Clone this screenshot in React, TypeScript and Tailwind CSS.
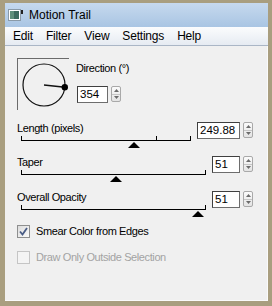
import React from 'react'

const font = { fontFamily: '"Liberation Sans", Arial, sans-serif' }

function Spin() {
  return (
    <div className="flex h-[16px] w-[10px] flex-col overflow-hidden rounded-[2px] border border-[#a9a9a9] bg-gradient-to-b from-[#fbfbfb] to-[#e4e4e4]">
      <div className="flex flex-1 items-center justify-center border-b border-[#c6c6c6]">
        <svg width="5" height="3" viewBox="0 0 5 3">
          <path d="M0 3 L2.5 0 L5 3 Z" fill="#6b6b6b" />
        </svg>
      </div>
      <div className="flex flex-1 items-center justify-center">
        <svg width="5" height="3" viewBox="0 0 5 3">
          <path d="M0 0 L2.5 3 L5 0 Z" fill="#6b6b6b" />
        </svg>
      </div>
    </div>
  )
}

function NumberBox({ value, width }: { value: string; width: string }) {
  return (
    <div className="flex items-start gap-[3px]">
      <div
        className={`${width} h-[17px] border border-[#6d6d6d] border-t-[#3f3f3f] border-l-[#3f3f3f] bg-white pl-[2px] text-[11.5px] leading-[15px] text-black`}
      >
        {value}
      </div>
      <Spin />
    </div>
  )
}

function Slider({
  label,
  trackWidth,
  thumb,
  tick,
  value,
  boxWidth,
}: {
  label: string
  trackWidth: string
  thumb: number
  tick?: number
  value: string
  boxWidth: string
}) {
  return (
    <div className="flex h-[34px] items-start justify-between pl-[12px] pr-[14px]">
      <div className="flex flex-col">
        <div className="h-[14px] text-[11px] leading-[14px] tracking-[-0.4px] text-black">{label}</div>
        <div className={`relative ml-[4px] mt-[1px] h-[5px] ${trackWidth} border-b border-l border-r border-black`}>
          {tick !== undefined && (
            <div className="absolute top-0 h-[4px] w-px bg-black" style={{ left: tick }} />
          )}
          <svg
            className="absolute top-[6px]"
            style={{ left: thumb - 6 }}
            width="12"
            height="6"
            viewBox="0 0 12 6"
          >
            <path d="M6 0 L12 6 L0 6 Z" fill="#000" />
          </svg>
        </div>
      </div>
      <div className="mt-[1px]">
        <NumberBox value={value} width={boxWidth} />
      </div>
    </div>
  )
}

function Dial() {
  return (
    <div className="h-[52px] w-[52px] border-l border-t border-[#6b6b6b] border-b-white border-r-white">
      <svg width="51" height="51" viewBox="0 0 51 51">
        <circle cx="26" cy="26" r="21" fill="none" stroke="#111" strokeWidth="1.2" />
        <line x1="26" y1="26" x2="47" y2="28.2" stroke="#111" strokeWidth="1.4" />
        <circle cx="46.8" cy="28.2" r="3.2" fill="#000" />
      </svg>
    </div>
  )
}

function Checkbox({ checked, disabled }: { checked?: boolean; disabled?: boolean }) {
  return (
    <div
      className={`flex h-[13px] w-[13px] items-center justify-center border ${
        disabled ? 'border-[#c5c5c5] bg-[#f4f4f4]' : 'border-[#8e8f8f] bg-gradient-to-br from-[#dcdcdc] to-[#fbfbfb]'
      }`}
    >
      {checked && (
        <svg width="9" height="9" viewBox="0 0 9 9">
          <path d="M1 4.5 L3.5 7.5 L8 1" fill="none" stroke="#4a5d86" strokeWidth="1.8" />
        </svg>
      )}
    </div>
  )
}

export default function App() {
  return (
    <div className="h-[306px] w-[272px] bg-[#a99e7f] pb-[5px] pl-[5px] pr-[4px] pt-[3px]" style={font}>
      <div className="flex h-full flex-col">
        {/* Title bar */}
        <div className="flex h-[24px] items-center gap-[6px] bg-gradient-to-b from-[#c6d9ee] to-[#a9c5e3] pl-[3px]">
          <svg width="15" height="12" viewBox="0 0 15 12">
            <rect x="0.5" y="0.5" width="12" height="11" fill="#fff" stroke="#8a9aa8" />
            <rect x="2" y="2" width="9" height="8" fill="#3d6b5e" />
            <rect x="2" y="2" width="4" height="8" fill="#5f8f7a" />
            <rect x="13" y="1" width="2" height="4" fill="#222" />
          </svg>
          <span className="text-[12px] text-black">Motion Trail</span>
        </div>

        {/* Menu bar */}
        <div className="flex h-[19px] items-center gap-[13px] border-b border-[#aab6c6] bg-gradient-to-b from-[#fbfcfd] to-[#e6ebf2] pl-[8px] text-[12px] tracking-[-0.2px] text-black">
          <span>Edit</span>
          <span>Filter</span>
          <span>View</span>
          <span>Settings</span>
          <span>Help</span>
        </div>

        {/* Content */}
        <div className="flex flex-1 flex-col border-b border-r border-[#fafafa] bg-[#f0f0f0]">
          <div className="mt-[12px] flex pl-[12px]">
            <Dial />
            <div className="ml-[7px] mt-[3px] flex flex-col">
              <div className="h-[14px] text-[11px] leading-[14px] tracking-[-0.4px] text-black">Direction (°)</div>
              <div className="ml-[1px] mt-[11px]">
                <NumberBox value="354" width="w-[31px]" />
              </div>
            </div>
          </div>

          <div className="mt-[11px]">
            <Slider label="Length (pixels)" trackWidth="w-[170px]" thumb={112} tick={134} value="249.88" boxWidth="w-[43px]" />
            <Slider label="Taper" trackWidth="w-[185px]" thumb={94} value="51" boxWidth="w-[28px]" />
            <div className="mt-[1px]">
              <Slider label="Overall Opacity" trackWidth="w-[185px]" thumb={176} value="51" boxWidth="w-[28px]" />
            </div>
          </div>

          <div className="flex h-[15px] items-center gap-[6px] pl-[12px]">
            <Checkbox checked />
            <span className="text-[11px] tracking-[-0.4px] text-black">Smear Color from Edges</span>
          </div>
          <div className="mt-[11px] flex h-[15px] items-center gap-[6px] pl-[12px]">
            <Checkbox disabled />
            <span className="text-[11px] tracking-[-0.4px] text-[#a3a3a3]">Draw Only Outside Selection</span>
          </div>
        </div>
      </div>
    </div>
  )
}
